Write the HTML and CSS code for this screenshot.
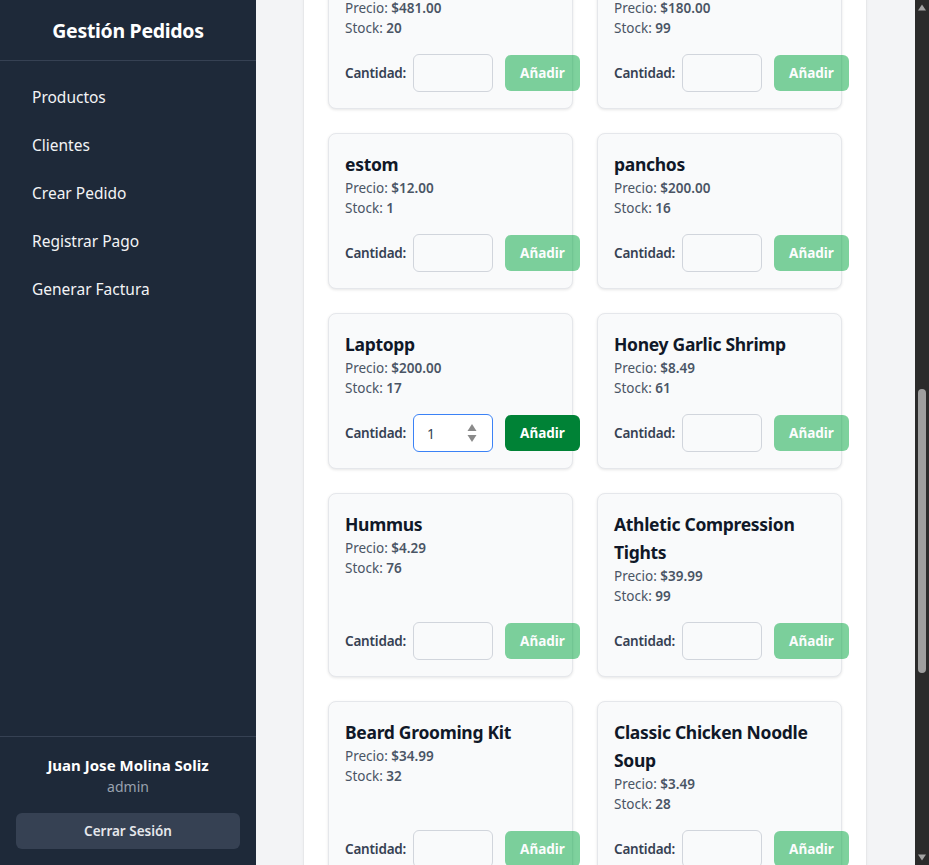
FILE: index.html
```html
<!DOCTYPE html>
<html lang="es">
<head>
<meta charset="utf-8">
<title>Gestión Pedidos - Crear Pedido</title>
<link rel="stylesheet" href="styles.css">
</head>
<body class="app">
  <aside class="sidebar">
    <div class="brand">Gestión Pedidos</div>
    <nav class="nav">
      <a class="nav-link" href="#">Productos</a>
      <a class="nav-link" href="#">Clientes</a>
      <a class="nav-link" href="#">Crear Pedido</a>
      <a class="nav-link" href="#">Registrar Pago</a>
      <a class="nav-link" href="#">Generar Factura</a>
    </nav>
    <div class="user">
      <div class="user-name">Juan Jose Molina Soliz</div>
      <div class="user-role">admin</div>
      <button class="logout" type="button">Cerrar Sesión</button>
    </div>
  </aside>

  <main class="main" id="main">
    <section class="panel">
      <h1 class="page-title">Crear Pedido</h1>
      <div class="field">
        <label class="field-label" for="cliente">Cliente</label>
        <select class="field-select" id="cliente"><option>Seleccione un cliente</option></select>
      </div>
      <h2 class="section-title">Productos disponibles</h2>

      <div class="grid">
        <div class="card"><div class="card-body"><h3 class="card-title">Wireless Mouse</h3><p class="card-line">Precio: <b>$25.00</b></p><p class="card-line">Stock: <b>40</b></p></div>
          <div class="actions"><span class="qty-label">Cantidad:</span><input class="qty" type="number"><button class="add" type="button" disabled>Añadir</button></div></div>
        <div class="card"><div class="card-body"><h3 class="card-title">Organic Green Tea</h3><p class="card-line">Precio: <b>$6.75</b></p><p class="card-line">Stock: <b>58</b></p></div>
          <div class="actions"><span class="qty-label">Cantidad:</span><input class="qty" type="number"><button class="add" type="button" disabled>Añadir</button></div></div>

        <div class="card"><div class="card-body"><h3 class="card-title">Monitor</h3><p class="card-line">Precio: <b>$320.00</b></p><p class="card-line">Stock: <b>12</b></p></div>
          <div class="actions"><span class="qty-label">Cantidad:</span><input class="qty" type="number"><button class="add" type="button" disabled>Añadir</button></div></div>
        <div class="card"><div class="card-body"><h3 class="card-title">Teclado</h3><p class="card-line">Precio: <b>$45.00</b></p><p class="card-line">Stock: <b>30</b></p></div>
          <div class="actions"><span class="qty-label">Cantidad:</span><input class="qty" type="number"><button class="add" type="button" disabled>Añadir</button></div></div>

        <div class="card"><div class="card-body"><h3 class="card-title">Silla</h3><p class="card-line">Precio: <b>$150.00</b></p><p class="card-line">Stock: <b>8</b></p></div>
          <div class="actions"><span class="qty-label">Cantidad:</span><input class="qty" type="number"><button class="add" type="button" disabled>Añadir</button></div></div>
        <div class="card"><div class="card-body"><h3 class="card-title">Mesa</h3><p class="card-line">Precio: <b>$210.00</b></p><p class="card-line">Stock: <b>5</b></p></div>
          <div class="actions"><span class="qty-label">Cantidad:</span><input class="qty" type="number"><button class="add" type="button" disabled>Añadir</button></div></div>

        <div class="card"><div class="card-body"><h3 class="card-title">Auriculares</h3><p class="card-line">Precio: <b>$60.00</b></p><p class="card-line">Stock: <b>22</b></p></div>
          <div class="actions"><span class="qty-label">Cantidad:</span><input class="qty" type="number"><button class="add" type="button" disabled>Añadir</button></div></div>
        <div class="card"><div class="card-body"><h3 class="card-title">Cafetera</h3><p class="card-line">Precio: <b>$89.90</b></p><p class="card-line">Stock: <b>14</b></p></div>
          <div class="actions"><span class="qty-label">Cantidad:</span><input class="qty" type="number"><button class="add" type="button" disabled>Añadir</button></div></div>

        <div class="card"><div class="card-body"><h3 class="card-title">Impresora</h3><p class="card-line">Precio: <b>$481.00</b></p><p class="card-line">Stock: <b>20</b></p></div>
          <div class="actions"><span class="qty-label">Cantidad:</span><input class="qty" type="number"><button class="add" type="button" disabled>Añadir</button></div></div>
        <div class="card"><div class="card-body"><h3 class="card-title">Tablet</h3><p class="card-line">Precio: <b>$180.00</b></p><p class="card-line">Stock: <b>99</b></p></div>
          <div class="actions"><span class="qty-label">Cantidad:</span><input class="qty" type="number"><button class="add" type="button" disabled>Añadir</button></div></div>

        <div class="card" id="anchor"><div class="card-body"><h3 class="card-title">estom</h3><p class="card-line">Precio: <b>$12.00</b></p><p class="card-line">Stock: <b>1</b></p></div>
          <div class="actions"><span class="qty-label">Cantidad:</span><input class="qty" type="number"><button class="add" type="button" disabled>Añadir</button></div></div>
        <div class="card"><div class="card-body"><h3 class="card-title">panchos</h3><p class="card-line">Precio: <b>$200.00</b></p><p class="card-line">Stock: <b>16</b></p></div>
          <div class="actions"><span class="qty-label">Cantidad:</span><input class="qty" type="number"><button class="add" type="button" disabled>Añadir</button></div></div>

        <div class="card"><div class="card-body"><h3 class="card-title">Laptopp</h3><p class="card-line">Precio: <b>$200.00</b></p><p class="card-line">Stock: <b>17</b></p></div>
          <div class="actions"><span class="qty-label">Cantidad:</span>
            <span class="qty-wrap"><input class="qty qty-focus" type="text" value="1"><svg class="spin" width="12" height="22" viewBox="0 0 12 22"><path d="M6 2 L10.5 9 L1.5 9 Z" fill="#8a8a8a"/><path d="M1.5 13 L10.5 13 L6 20 Z" fill="#8a8a8a"/></svg></span>
            <button class="add add-on" type="button">Añadir</button></div></div>
        <div class="card"><div class="card-body"><h3 class="card-title">Honey Garlic Shrimp</h3><p class="card-line">Precio: <b>$8.49</b></p><p class="card-line">Stock: <b>61</b></p></div>
          <div class="actions"><span class="qty-label">Cantidad:</span><input class="qty" type="number"><button class="add" type="button" disabled>Añadir</button></div></div>

        <div class="card"><div class="card-body"><h3 class="card-title">Hummus</h3><p class="card-line">Precio: <b>$4.29</b></p><p class="card-line">Stock: <b>76</b></p></div>
          <div class="actions"><span class="qty-label">Cantidad:</span><input class="qty" type="number"><button class="add" type="button" disabled>Añadir</button></div></div>
        <div class="card"><div class="card-body"><h3 class="card-title">Athletic Compression Tights</h3><p class="card-line">Precio: <b>$39.99</b></p><p class="card-line">Stock: <b>99</b></p></div>
          <div class="actions"><span class="qty-label">Cantidad:</span><input class="qty" type="number"><button class="add" type="button" disabled>Añadir</button></div></div>

        <div class="card"><div class="card-body"><h3 class="card-title">Beard Grooming Kit</h3><p class="card-line">Precio: <b>$34.99</b></p><p class="card-line">Stock: <b>32</b></p></div>
          <div class="actions"><span class="qty-label">Cantidad:</span><input class="qty" type="number"><button class="add" type="button" disabled>Añadir</button></div></div>
        <div class="card"><div class="card-body"><h3 class="card-title">Classic Chicken Noodle Soup</h3><p class="card-line">Precio: <b>$3.49</b></p><p class="card-line">Stock: <b>28</b></p></div>
          <div class="actions"><span class="qty-label">Cantidad:</span><input class="qty" type="number"><button class="add" type="button" disabled>Añadir</button></div></div>

        <div class="card"><div class="card-body"><h3 class="card-title">Granola Bars</h3><p class="card-line">Precio: <b>$5.99</b></p><p class="card-line">Stock: <b>45</b></p></div>
          <div class="actions"><span class="qty-label">Cantidad:</span><input class="qty" type="number"><button class="add" type="button" disabled>Añadir</button></div></div>
        <div class="card"><div class="card-body"><h3 class="card-title">Yoga Mat</h3><p class="card-line">Precio: <b>$24.50</b></p><p class="card-line">Stock: <b>37</b></p></div>
          <div class="actions"><span class="qty-label">Cantidad:</span><input class="qty" type="number"><button class="add" type="button" disabled>Añadir</button></div></div>
      </div>

      <h2 class="section-title">Resumen del pedido</h2>
      <p class="empty">No hay productos en el pedido.</p>
      <div class="summary-footer">
        <span class="total">Total: $0.00</span>
        <button class="confirm" type="button" disabled>Confirmar Pedido</button>
      </div>
    </section>
  </main>

  <div class="scrollbar" aria-hidden="true">
    <svg class="sb-arrow" width="14" height="16" viewBox="0 0 14 16"><path d="M7 4.5 L11 10.5 L3 10.5 Z" fill="#a3a3a3"/></svg>
    <div class="sb-track"><div class="sb-thumb"></div></div>
    <svg class="sb-arrow" width="14" height="16" viewBox="0 0 14 16"><path d="M3 5.5 L11 5.5 L7 11.5 Z" fill="#a3a3a3"/></svg>
  </div>
  <script src="script.js"></script>
</body>
</html>
```

FILE: script.js
```js
(function () {
  var main = document.getElementById('main');
  var anchor = document.getElementById('anchor');
  function place() {
    var top = anchor.getBoundingClientRect().top;
    main.scrollTop = main.scrollTop + top - 133;
  }
  place();
  window.addEventListener('load', place);
})();
```

FILE: styles.css
```css
* { box-sizing: border-box; }

html, body { height: 100%; }

.app {
  margin: 0;
  display: flex;
  height: 100vh;
  overflow: hidden;
  font-family: "Noto Sans", "Open Sans", sans-serif;
  background: #f3f4f6;
  color: #101828;
}

/* Sidebar */
.sidebar {
  width: 256px;
  flex-shrink: 0;
  background: #1e2939;
  color: #ffffff;
  display: flex;
  flex-direction: column;
}

.brand {
  height: 61px;
  border-bottom: 1px solid #364153;
  display: flex;
  align-items: center;
  justify-content: center;
  font-size: 19.5px;
  font-weight: 700;
  letter-spacing: -0.3px;
}

.nav {
  flex: 1;
  display: flex;
  flex-direction: column;
  gap: 8px;
  padding: 16px;
}

.nav-link {
  display: block;
  padding: 8px 16px;
  line-height: 24px;
  font-size: 15.5px;
  color: #f3f4f6;
  text-decoration: none;
  border-radius: 6px;
}

.user {
  border-top: 1px solid #364153;
  padding: 16px;
  text-align: center;
}

.user-name {
  font-size: 15px;
  line-height: 24px;
  font-weight: 700;
}

.user-role {
  font-size: 14px;
  line-height: 20px;
  color: #99a1af;
}

.logout {
  margin-top: 16px;
  width: 100%;
  height: 36px;
  border: 0;
  border-radius: 6px;
  background: #364153;
  color: #e5e7eb;
  font-family: inherit;
  font-size: 13.5px;
  font-weight: 600;
}

/* Main */
.main {
  flex: 1;
  overflow: hidden;
  padding: 24px 49px 24px 48px;
}

.panel {
  background: #ffffff;
  border-radius: 8px;
  box-shadow: 0 1px 3px rgba(0, 0, 0, 0.1), 0 1px 2px rgba(0, 0, 0, 0.06);
  padding: 24px;
}

.page-title {
  margin: 0 0 24px;
  font-size: 24px;
  line-height: 32px;
  font-weight: 700;
}

.field { display: flex; flex-direction: column; gap: 6px; margin-bottom: 24px; }
.field-label { font-size: 14px; font-weight: 600; color: #364153; }
.field-select {
  height: 38px;
  border: 1px solid #d1d5dc;
  border-radius: 6px;
  padding: 0 12px;
  font-family: inherit;
  font-size: 14px;
  background: #ffffff;
}

.section-title {
  margin: 0 0 16px;
  font-size: 20px;
  line-height: 28px;
  font-weight: 700;
}

.grid {
  display: grid;
  grid-template-columns: 1fr 1fr;
  gap: 24px;
  margin-bottom: 32px;
}

.card {
  display: flex;
  flex-direction: column;
  background: #f9fafb;
  border: 1px solid #e5e7eb;
  border-radius: 8px;
  box-shadow: 0 1px 3px rgba(0, 0, 0, 0.1);
  padding: 16px;
  min-width: 0;
}

.card-body { flex: 1; }

.card-title {
  margin: 0;
  font-size: 17.5px;
  line-height: 28px;
  font-weight: 700;
  color: #101828;
  letter-spacing: -0.3px;
}

.card-line {
  margin: 0;
  font-size: 13.5px;
  line-height: 20px;
  color: #4a5565;
}

.card-line b { font-weight: 600; color: #4a5565; }

.actions {
  margin-top: 16px;
  display: flex;
  align-items: center;
}

.qty-label {
  flex-shrink: 0;
  width: 60px;
  white-space: nowrap;
  font-size: 13.5px;
  font-weight: 600;
  letter-spacing: -0.2px;
  color: #364153;
  margin-right: 8px;
}

.qty {
  flex-shrink: 0;
  width: 80px;
  height: 38px;
  border: 1px solid #d1d5dc;
  border-radius: 6px;
  background: transparent;
  padding: 0 13px;
  font-family: inherit;
  font-size: 14px;
  color: #364153;
  -moz-appearance: textfield;
}

.qty::-webkit-inner-spin-button,
.qty::-webkit-outer-spin-button { -webkit-appearance: none; margin: 0; }

.qty-wrap {
  position: relative;
  flex-shrink: 0;
  display: flex;
}

.qty-focus {
  border-color: #3b82f6;
  outline: none;
  background: #ffffff;
}

.spin {
  position: absolute;
  right: 15px;
  top: 8px;
}

.add {
  flex-shrink: 0;
  margin-left: 12px;
  width: 75px;
  height: 36px;
  padding: 0;
  border: 0;
  border-radius: 6px;
  background: #00a63e;
  opacity: 0.5;
  color: #ffffff;
  font-family: inherit;
  font-size: 13.5px;
  font-weight: 700;
}

.add-on {
  background: #008236;
  opacity: 1;
}

.empty { margin: 0 0 16px; font-size: 14px; color: #6a7282; }

.summary-footer {
  display: flex;
  align-items: center;
  justify-content: space-between;
  border-top: 1px solid #e5e7eb;
  padding-top: 16px;
}

.total { font-size: 18px; font-weight: 700; }

.confirm {
  height: 40px;
  padding: 0 20px;
  border: 0;
  border-radius: 6px;
  background: #155dfc;
  opacity: 0.5;
  color: #ffffff;
  font-family: inherit;
  font-size: 14px;
  font-weight: 700;
}

/* Page scrollbar */
.scrollbar {
  width: 14px;
  flex-shrink: 0;
  background: #2b2b2b;
  display: flex;
  flex-direction: column;
}

.sb-arrow { display: block; flex-shrink: 0; }

.sb-track {
  flex: 1;
  padding: 373px 3px 0 3px;
}

.sb-thumb {
  height: 284px;
  border-radius: 4px;
  background: #9f9f9f;
}
```
